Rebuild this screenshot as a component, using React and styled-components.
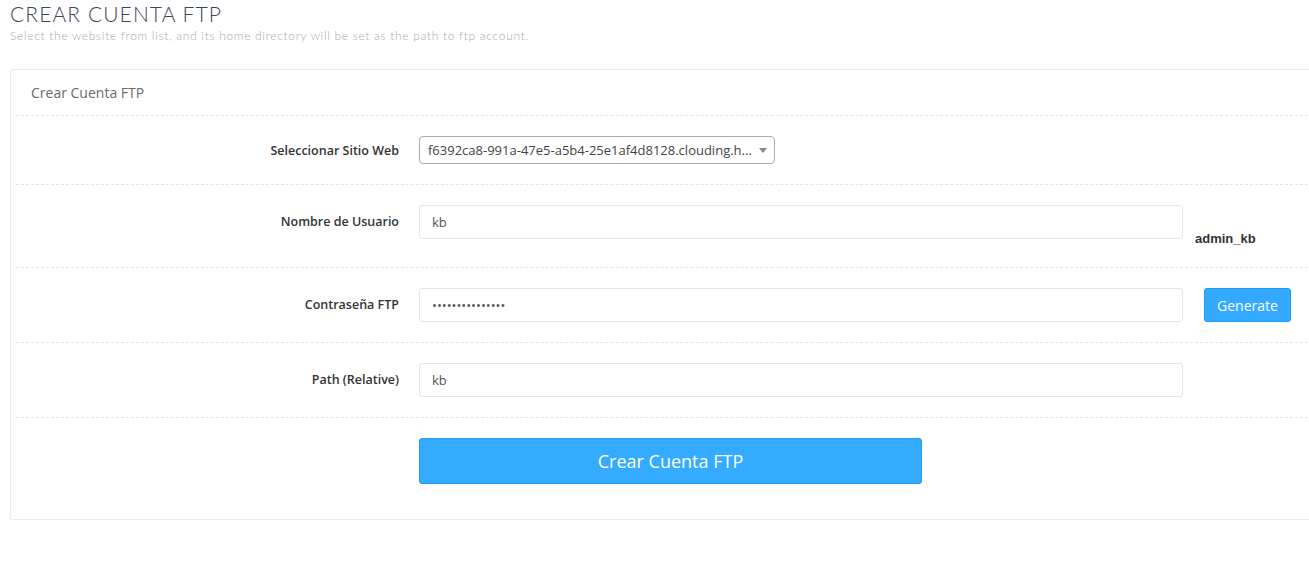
import React from 'react';
import styled, { createGlobalStyle } from 'styled-components';

const GlobalStyle = createGlobalStyle`
    html, body {
        margin: 0;
        padding: 0;
        background: #fff;
        overflow: hidden;
    }
    body {
        font-family: "Open Sans", "Liberation Sans", sans-serif;
        color: #555;
    }
`;

const Page = styled.div`
    padding: 0 0 0 10px;
`;

const PageTitle = styled.h2`
    margin: 0;
    padding-top: 2px;
    font-family: Lato, "Open Sans", sans-serif;
    font-weight: 300;
    font-size: 21px;
    line-height: 24px;
    color: #3b4657;
    letter-spacing: 1.1px;
`;

const PageSubtitle = styled.p`
    margin: 3px 0 0;
    font-family: Lato, "Open Sans", sans-serif;
    font-weight: 300;
    font-size: 12px;
    line-height: 14px;
    color: #a8a8a8;
    letter-spacing: 0.68px;
`;

const Panel = styled.div`
    margin-top: 26px;
    margin-right: -30px;
    height: 451px;
    box-sizing: border-box;
    border: 1px solid #e6e9ee;
    border-radius: 3px;
    box-shadow: 0 1px 1px rgba(0, 0, 0, 0.06);
    padding: 0 5px;
`;

const PanelHeader = styled.div`
    height: 45px;
    padding-left: 15px;
    display: flex;
    align-items: center;
    font-size: 14px;
    color: #6b6b6b;
    border-bottom: 1px dashed #e1e6ee;
`;

const Row = styled.div`
    display: grid;
    grid-template-columns: 383px 764px max-content;
    column-gap: 20px;
    align-items: start;
    padding: 20px 0;
    border-bottom: ${p => (p.$last ? 'none' : '1px dashed #e1e6ee')};
`;

const Label = styled.label`
    text-align: right;
    font-size: 12.5px;
    font-weight: 600;
    color: #333;
    line-height: ${p => p.$height || 34}px;
    padding-top: ${p => p.$offset || 0}px;
`;

const SelectBox = styled.div`
    position: relative;
    width: 356px;
    height: 28px;
    box-sizing: border-box;
    border: 1px solid #aaa;
    border-radius: 4px;
    font-size: 13px;
    color: #444;
    line-height: 26px;
    padding-left: 8px;
    white-space: nowrap;
`;

const Caret = styled.span`
    position: absolute;
    right: 7px;
    top: 11px;
    border-left: 4px solid transparent;
    border-right: 4px solid transparent;
    border-top: 5px solid #888;
`;

const TextInput = styled.input`
    width: 100%;
    height: 34px;
    box-sizing: border-box;
    border: 1px solid #e2e7ee;
    border-radius: 3px;
    padding: 0 12px;
    font-family: "Open Sans", "Liberation Sans", sans-serif;
    font-size: 13px;
    color: #555;
    outline: none;
    background: #fff;
`;

const Hint = styled.div`
    padding-top: 25px;
    margin-left: -8px;
    font-size: 13px;
    font-weight: 700;
    color: #333;
    font-family: "Liberation Sans", Arial, sans-serif;
    line-height: 17px;
`;

const SmallButton = styled.button`
    height: 34px;
    width: 87px;
    margin-left: 1px;
    box-sizing: border-box;
    background: #33aaff;
    border: 1px solid #1c9cf6;
    border-radius: 3px;
    color: #fff;
    font-family: "Open Sans", "Liberation Sans", sans-serif;
    font-size: 14px;
    cursor: pointer;
`;

const SubmitButton = styled.button`
    grid-column: 2;
    width: 503px;
    height: 46px;
    box-sizing: border-box;
    background: #34abff;
    border: 1px solid #1c9cf6;
    border-radius: 3px;
    color: #fff;
    font-family: "Open Sans", "Liberation Sans", sans-serif;
    font-size: 18px;
    cursor: pointer;
`;

const Empty = styled.div``;

export default function App() {
    return (
        <>
            <GlobalStyle />
            <Page>
                <PageTitle>CREAR CUENTA FTP</PageTitle>
                <PageSubtitle>
                    Select the website from list, and its home directory will be set as the path to ftp account.
                </PageSubtitle>
                <Panel>
                    <PanelHeader>Crear Cuenta FTP</PanelHeader>
                    <Row>
                        <Label $height={26} $offset={2}>Seleccionar Sitio Web</Label>
                        <SelectBox>
                            f6392ca8-991a-47e5-a5b4-25e1af4d8128.clouding.h...
                            <Caret />
                        </SelectBox>
                        <Empty />
                    </Row>
                    <Row>
                        <Label>Nombre de Usuario</Label>
                        <TextInput defaultValue="kb" />
                        <Hint>admin_kb</Hint>
                    </Row>
                    <Row>
                        <Label>Contraseña FTP</Label>
                        <TextInput type="password" defaultValue="abcdefghijklmno" />
                        <SmallButton>Generate</SmallButton>
                    </Row>
                    <Row>
                        <Label>Path (Relative)</Label>
                        <TextInput defaultValue="kb" />
                        <Empty />
                    </Row>
                    <Row $last>
                        <SubmitButton>Crear Cuenta FTP</SubmitButton>
                    </Row>
                </Panel>
            </Page>
        </>
    );
}
